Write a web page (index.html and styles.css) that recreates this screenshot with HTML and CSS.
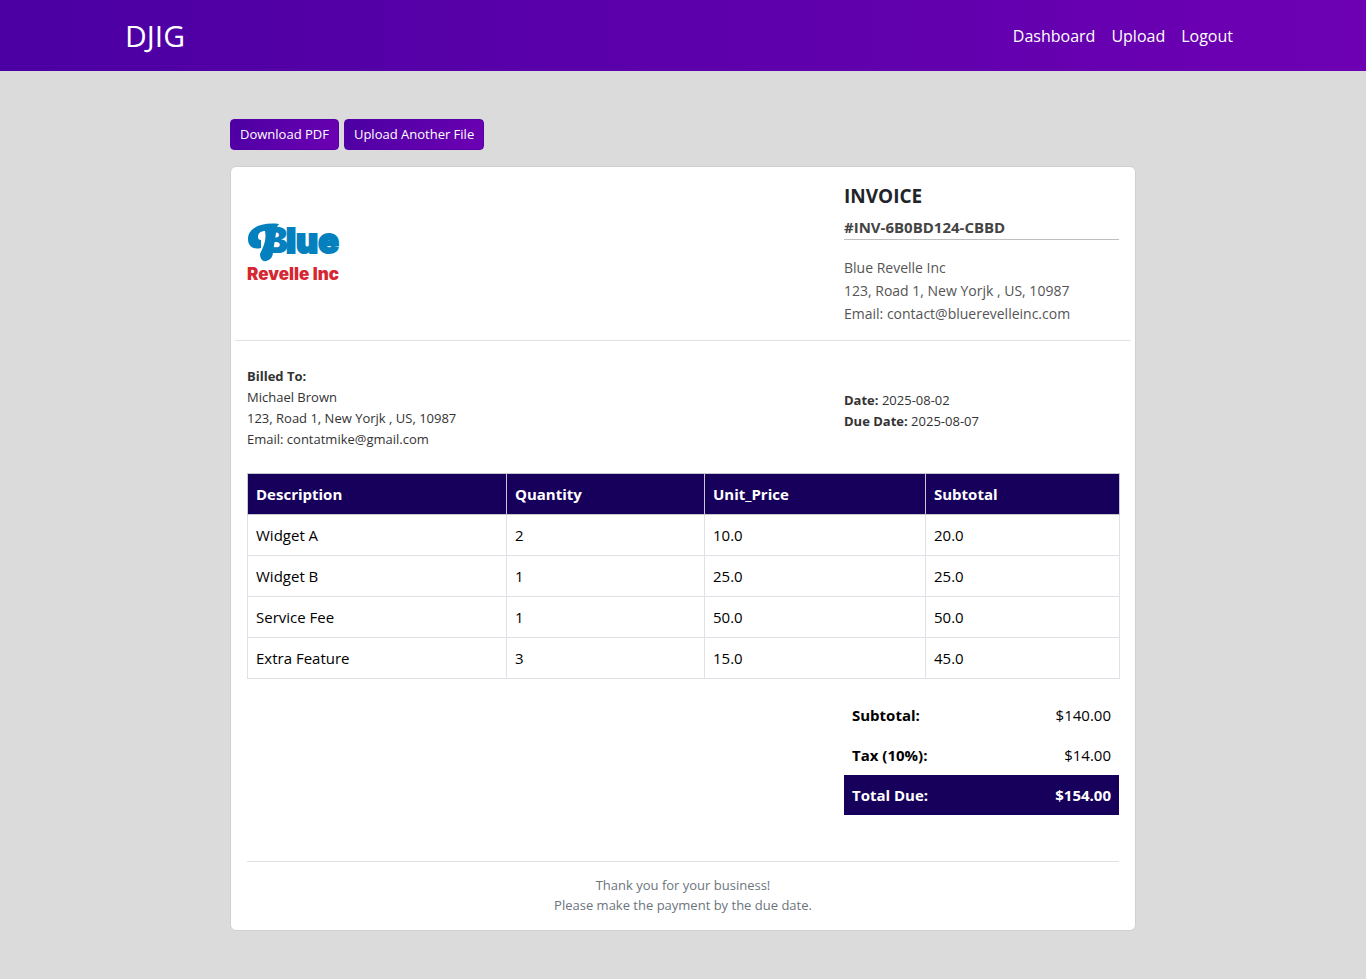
FILE: index.html
```
<!DOCTYPE html>
<html lang="en">
<head>
    <meta charset="UTF-8">
    <meta name="viewport" content="width=device-width, initial-scale=1.0">
    <title>Invoice - DJIG</title>
    <link rel="stylesheet" href="styles.css">
</head>
<body>
    <nav class="navbar">
        <div class="nav-container">
            <a href="#" class="brand">DJIG</a>
            <ul class="nav-links">
                <li><a href="#">Dashboard</a></li>
                <li><a href="#">Upload</a></li>
                <li><a href="#">Logout</a></li>
            </ul>
        </div>
    </nav>

    <main class="container">
        <div class="actions">
            <button type="button" class="btn">Download PDF</button>
            <button type="button" class="btn">Upload Another File</button>
        </div>

        <div class="card">
            <!-- Logo and company details -->
            <header class="invoice-header">
                <svg class="logo" viewBox="0 0 100 80" width="100" height="80" role="img" aria-label="Blue Revelle Inc">
                    <path class="swash" d="M32 10C14 8 1 14 1 25c0 7 5 11 13 9v-8c-2 0-3-1-3-3 0-4 3-6 7-6 2 7-1 15-5 23 0 5 3 8 6 7 5-1 7-5 7-9l4-25z"/>
                    <text class="logo-b" x="17" y="39" font-size="36">B</text>
                    <text class="logo-blue" x="39" y="39" font-size="34">lue</text>
                    <text class="logo-red" x="0" y="66" font-size="17">Revelle Inc</text>
                </svg>
                <div class="company">
                    <h1>INVOICE</h1>
                    <h2>#INV-6B0BD124-CBBD</h2>
                    <p>Blue Revelle Inc<br>
                    123, Road 1, New Yorjk , US, 10987<br>
                    Email: contact@bluerevelleinc.com</p>
                </div>
            </header>

            <section class="billing">
                <p>
                    <strong>Billed To:</strong><br>
                    Michael Brown<br>
                    123, Road 1, New Yorjk , US, 10987<br>
                    Email: contatmike@gmail.com
                </p>
                <p class="dates">
                    <strong>Date:</strong> 2025-08-02<br>
                    <strong>Due Date:</strong> 2025-08-07
                </p>
            </section>

            <table class="items">
                <thead>
                    <tr>
                        <th class="col-description">Description</th>
                        <th class="col-quantity">Quantity</th>
                        <th class="col-price">Unit_Price</th>
                        <th class="col-subtotal">Subtotal</th>
                    </tr>
                </thead>
                <tbody>
                    <tr>
                        <td>Widget A</td>
                        <td>2</td>
                        <td>10.0</td>
                        <td>20.0</td>
                    </tr>
                    <tr>
                        <td>Widget B</td>
                        <td>1</td>
                        <td>25.0</td>
                        <td>25.0</td>
                    </tr>
                    <tr>
                        <td>Service Fee</td>
                        <td>1</td>
                        <td>50.0</td>
                        <td>50.0</td>
                    </tr>
                    <tr>
                        <td>Extra Feature</td>
                        <td>3</td>
                        <td>15.0</td>
                        <td>45.0</td>
                    </tr>
                </tbody>
            </table>

            <table class="summary">
                <tr>
                    <th>Subtotal:</th>
                    <td>$140.00</td>
                </tr>
                <tr>
                    <th>Tax (10%):</th>
                    <td>$14.00</td>
                </tr>
                <tr class="total">
                    <th>Total Due:</th>
                    <td>$154.00</td>
                </tr>
            </table>

            <footer class="invoice-footer">
                Thank you for your business!<br>
                Please make the payment by the due date.
            </footer>
        </div>
    </main>
</body>
</html>
```
FILE: styles.css
```
* {
    margin: 0;
    padding: 0;
    box-sizing: border-box;
}

body {
    background-color: #dbdbdb;
    color: #212529;
    font-family: "Segoe UI", "Open Sans", "Noto Sans", sans-serif;
    font-size: 15px;
    line-height: 24px;
}

.navbar {
    background: linear-gradient(to right, #4b00a3, #6d00b3);
    padding: 13px 0;
}

.nav-container {
    display: flex;
    justify-content: space-between;
    align-items: center;
    max-width: 1140px;
    margin: 0 auto;
    padding: 0 20px 0 12px;
}

.brand {
    color: white;
    font-size: 30px;
    line-height: 45px;
    text-decoration: none;
}

.nav-links {
    display: flex;
    gap: 16px;
    list-style: none;
}

.nav-links a {
    color: white;
    font-size: 16px;
    text-decoration: none;
}

.container {
    max-width: 906px;
    margin: 0 auto;
    padding: 48px 0;
}

.actions {
    display: flex;
    gap: 5px;
    margin-bottom: 16px;
}

.btn {
    background: linear-gradient(135deg, #4b00a3, #6d00b3);
    color: white;
    border: 1px solid #5500a6;
    border-radius: 4px;
    padding: 4px 9px;
    font-family: inherit;
    font-size: 13px;
    line-height: 21px;
    cursor: pointer;
}

.card {
    background-color: white;
    border: 1px solid #d0d0d0;
    border-radius: 6px;
    padding: 16px 16px 15px;
}

.invoice-header {
    display: flex;
    justify-content: space-between;
    align-items: center;
    margin: 0 -12px 25px;
    padding: 0 12px 15px;
    border-bottom: 1px solid #dee2e6;
}

.logo {
    flex: none;
}

.logo-b,
.logo-blue,
.logo-red {
    font-family: Inter, sans-serif;
    font-weight: 900;
}

.logo-b,
.swash {
    fill: #0580bf;
}

.logo-blue {
    fill: #0580bf;
    stroke: #0580bf;
    stroke-width: 2;
}

.logo-red {
    fill: #d62631;
}

.company {
    width: 275px;
}

.company h1 {
    font-size: 19px;
    font-weight: 700;
    line-height: 26px;
    margin-bottom: 8px;
}

.company h2 {
    color: #444;
    font-size: 15px;
    font-weight: 700;
    line-height: 20px;
    padding-bottom: 2px;
    border-bottom: 1px solid #bfbfbf;
    margin-bottom: 16px;
}

.company p {
    color: #555;
    font-size: 14px;
    line-height: 23px;
}

.billing {
    display: flex;
    justify-content: space-between;
    align-items: center;
    margin-bottom: 23px;
    color: #333;
    font-size: 13px;
    line-height: 21px;
}

.dates {
    width: 275px;
    padding-top: 5px;
}

table {
    border-collapse: collapse;
    color: black;
}

th {
    text-align: left;
}

th,
td {
    padding: 8px;
}

.items {
    width: 100%;
    table-layout: fixed;
    margin-bottom: 16px;
}

.items th,
.items td {
    border: 1px solid #dee2e6;
}

.items th {
    background-color: #17005c;
    border-color: #c5c8cc;
    color: white;
}

.col-description {
    width: 259px;
}

.col-quantity {
    width: 198px;
}

.col-price {
    width: 221px;
}

.col-subtotal {
    width: 194px;
}

.summary {
    width: 275px;
    margin-left: auto;
    margin-bottom: 46px;
}

.summary td {
    text-align: right;
}

.total {
    background-color: #17005c;
    color: white;
}

.total td {
    font-weight: bold;
}

.invoice-footer {
    border-top: 1px solid #dee2e6;
    padding-top: 13px;
    color: #6c757d;
    font-size: 13px;
    line-height: 20px;
    text-align: center;
}
```
